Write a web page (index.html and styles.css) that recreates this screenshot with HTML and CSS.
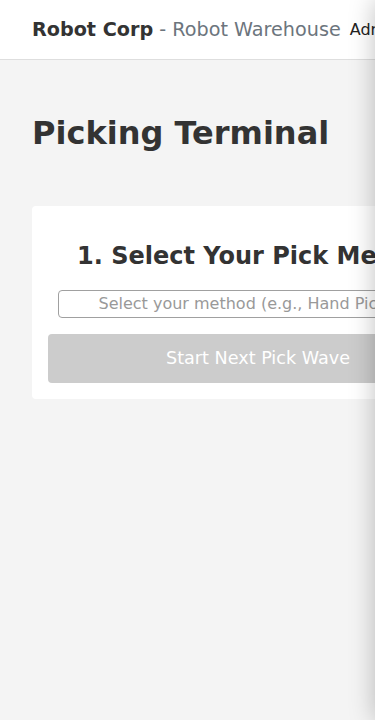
FILE: index.html
```html
<!DOCTYPE html>
<html lang="en">
<head>
<meta charset="utf-8">
<meta name="viewport" content="width=device-width, initial-scale=1">
<title>Picking Terminal</title>
<link rel="stylesheet" href="styles.css">
</head>
<body>
<div class="page">
  <header class="topbar">
    <div class="brand"><strong class="brand-name">Robot Corp</strong> <span class="brand-sub">- Robot Warehouse</span></div>
    <nav class="nav"><a class="nav-link" href="#">Admin Dashboard</a></nav>
  </header>
  <main class="main">
    <h1 class="title">Picking Terminal</h1>
    <section class="card">
      <h2 class="card-title">1. Select Your Pick Method</h2>
      <input class="method-input" type="text" placeholder="Select your method (e.g., Hand Picking)">
      <button class="start-btn" type="button" disabled>Start Next Pick Wave</button>
    </section>
  </main>
</div>
<div class="side-panel"></div>
</body>
</html>
```
FILE: styles.css
```css
html, body {
  margin: 0;
  padding: 0;
  overflow-x: hidden;
}
body {
  background: #f4f4f4;
  font-family: "DejaVu Sans", sans-serif;
  color: #333;
}
.page {
  min-width: 600px;
}
.topbar {
  height: 59px;
  background: #fff;
  border-bottom: 1px solid #dedede;
  display: flex;
  align-items: center;
  gap: 9px;
  padding: 0 32px;
  white-space: nowrap;
}
.brand {
  font-size: 19.2px;
}
.brand-name {
  color: #333;
  font-weight: bold;
}
.brand-sub {
  color: #6c757d;
}
.nav-link {
  color: #222;
  text-decoration: none;
  font-size: 16px;
}
.main {
  padding: 0 32px;
}
.title {
  font-size: 32px;
  margin: 54px 0 54px;
  color: #333;
}
.card {
  width: 452px;
  box-sizing: border-box;
  background: #fff;
  border-radius: 4px;
  padding: 16px;
}
.card-title {
  font-size: 24px;
  text-align: center;
  margin: 19.92px 0;
  white-space: nowrap;
}
.method-input {
  display: block;
  box-sizing: border-box;
  width: 400px;
  height: 28px;
  margin: 0 auto;
  padding: 4px 8px;
  border: 1px solid #a0a0a0;
  border-radius: 4px;
  font-family: "DejaVu Sans", sans-serif;
  font-size: 16px;
  text-align: center;
  background: #fff;
}
.method-input::placeholder {
  color: #999;
}
.start-btn {
  display: block;
  width: 100%;
  height: 49px;
  margin-top: 16px;
  border: none;
  border-radius: 4px;
  background: #ccc;
  color: #fff;
  font-family: "DejaVu Sans", sans-serif;
  font-size: 17.6px;
}
.side-panel {
  position: fixed;
  top: 0;
  left: 100%;
  width: 300px;
  height: 100%;
  background: #fff;
  box-shadow: 0 0 24px rgba(0, 0, 0, 0.25);
}
```
